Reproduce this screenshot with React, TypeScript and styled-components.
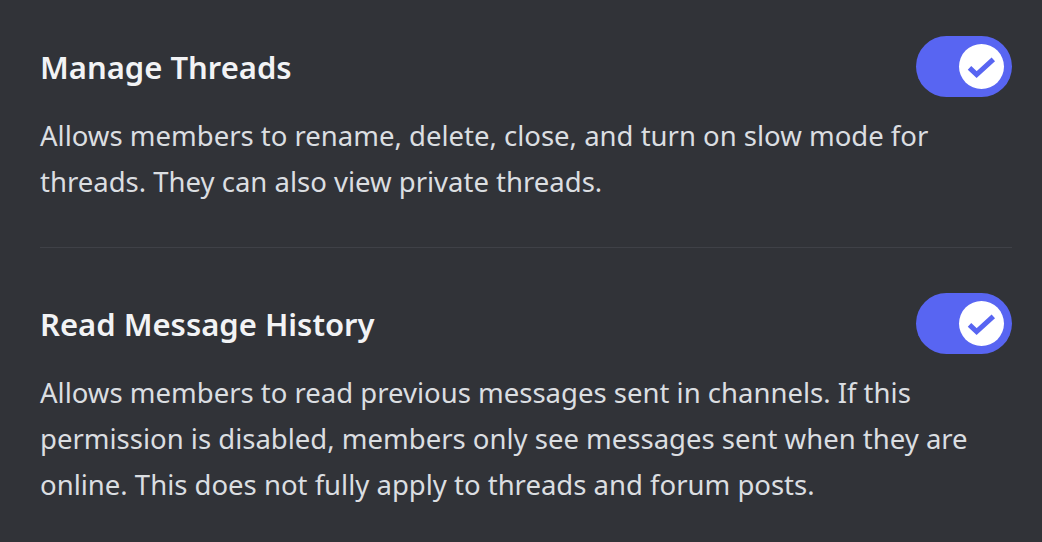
import React from "react";
import styled, { createGlobalStyle } from "styled-components";

type Permission = {
  title: string;
  description: string;
  enabled: boolean;
};

const permissions: Permission[] = [
  {
    title: "Manage Threads",
    description:
      "Allows members to rename, delete, close, and turn on slow mode for threads. They can also view private threads.",
    enabled: true,
  },
  {
    title: "Read Message History",
    description:
      "Allows members to read previous messages sent in channels. If this permission is disabled, members only see messages sent when they are online. This does not fully apply to threads and forum posts.",
    enabled: true,
  },
];

const GlobalStyle = createGlobalStyle`
  html, body {
    margin: 0;
    padding: 0;
    background: #313338;
  }
  * {
    box-sizing: border-box;
  }
`;

const Page = styled.div`
  width: 1042px;
  height: 542px;
  overflow: hidden;
  background: #313338;
  padding: 36px 30px 0 40px;
  font-family: "Noto Sans", "Open Sans", sans-serif;
`;

const Section = styled.section`
  display: flex;
  flex-direction: column;
`;

const Header = styled.div`
  display: flex;
  align-items: center;
  justify-content: space-between;
  height: 61px;
`;

const Title = styled.h2`
  margin: 0;
  font-size: 31px;
  font-weight: 600;
  color: #f2f3f5;
`;

const Description = styled.p`
  margin: 16px 0 0;
  font-size: 27.5px;
  line-height: 46px;
  color: #dbdee1;
`;

const Divider = styled.hr`
  margin: 42px 0 45px;
  border: none;
  height: 1px;
  background: #3f4147;
`;

const Track = styled.button<{ $on: boolean }>`
  display: flex;
  align-items: center;
  justify-content: ${(p) => (p.$on ? "flex-end" : "flex-start")};
  width: 96px;
  height: 61px;
  padding: 0 8px;
  border: none;
  border-radius: 31px;
  background: ${(p) => (p.$on ? "#5865f2" : "#80848e")};
  cursor: pointer;
`;

const Knob = styled.span`
  display: flex;
  align-items: center;
  justify-content: center;
  width: 45px;
  height: 45px;
  border-radius: 50%;
  background: #ffffff;
`;

const Toggle = ({ on }: { on: boolean }) => (
  <Track $on={on} aria-pressed={on}>
    <Knob>
      <svg width="45" height="45" viewBox="0 0 24 24">
        <path
          d="M5.6 12.7 L9.4 16.3 L18.3 8.2"
          fill="none"
          stroke="#5865f2"
          strokeWidth="2.7"
        />
      </svg>
    </Knob>
  </Track>
);

export default function App() {
  return (
    <>
      <GlobalStyle />
      <Page>
        {permissions.map((perm, i) => (
          <React.Fragment key={perm.title}>
            {i > 0 && <Divider />}
            <Section>
              <Header>
                <Title>{perm.title}</Title>
                <Toggle on={perm.enabled} />
              </Header>
              <Description>{perm.description}</Description>
            </Section>
          </React.Fragment>
        ))}
      </Page>
    </>
  );
}
